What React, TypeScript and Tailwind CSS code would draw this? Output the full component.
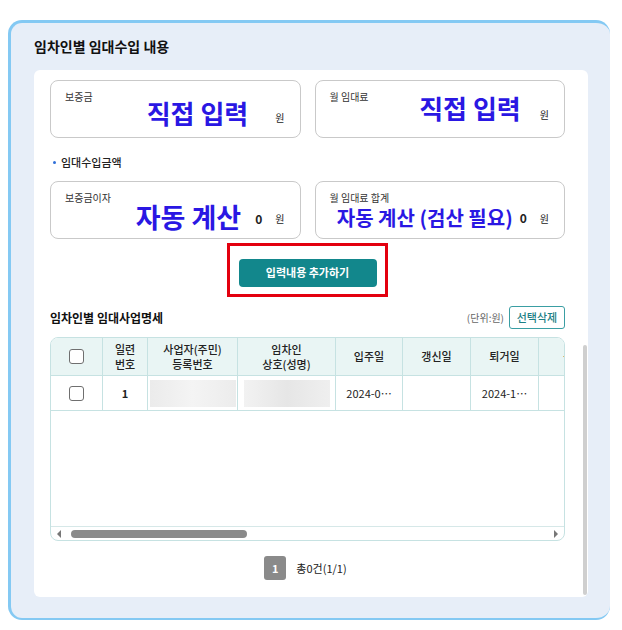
import React from 'react';

const blue = 'text-[#2a17e3]';

function Checkbox() {
    return <span className="block h-[15px] w-[15px] rounded-[3px] border border-[#6f6f6f] bg-white" />;
}

function AmountBox({
    label,
    children,
}: {
    label: string;
    children: React.ReactNode;
}) {
    return (
        <div className="flex h-[58px] flex-1 flex-col rounded-[8px] border border-[#c9c9c9] bg-white pl-[14px] pr-[15px] pt-[9px]">
            <span className="text-[10px] leading-[14px] text-[#333]">{label}</span>
            {children}
        </div>
    );
}

const cols = [
    { w: 'w-[52px]', head: <Checkbox />, cell: <Checkbox /> },
    { w: 'w-[45px]', head: <>일련<br />번호</>, cell: '1' },
    { w: 'w-[90px]', head: <>사업자(주민)<br />등록번호</>, cell: <span className="block h-[27px] w-[86px] bg-linear-to-r from-[#ebebeb] via-[#f4f4f4] to-[#ececec]" /> },
    { w: 'w-[98px]', head: <>임차인<br />상호(성명)</>, cell: <span className="block h-[27px] w-[86px] bg-linear-to-r from-[#f2f2f2] via-[#e6e6e6] to-[#efefef]" /> },
    { w: 'w-[67px]', head: '입주일', cell: '2024-0…' },
    { w: 'w-[68px]', head: '갱신일', cell: '' },
    { w: 'w-[68px]', head: '퇴거일', cell: '2024-1…' },
    { w: 'w-[80px]', head: '등록일', cell: '' },
];

export default function App() {
    return (
        <div className="h-[630px] w-[622px] overflow-hidden bg-white pl-[8px] pt-[20px] font-['Noto_Sans_CJK_KR','Noto_Sans',sans-serif] text-[#222]">
            <div className="flex h-[600px] w-[602px] flex-col rounded-[14px] border-b-2 border-l-[3px] border-t-[3px] border-[#84c9f3] bg-[#e7eef8] pl-[23px] pr-[22px]">
                <h2 className="h-[47px] pt-[12px] text-[14px] font-bold leading-[22px] text-[#111]">임차인별 임대수입 내용</h2>

                <div className="mb-[21px] flex flex-1 rounded-[6px] bg-white">
                    <div className="ml-[16px] flex w-[515px] flex-col pt-[10px]">
                        {/* 직접 입력 */}
                        <div className="flex gap-[14px]">
                            <AmountBox label="보증금">
                                <div className="-mt-[6px] flex items-center justify-end">
                                    <span className={`text-[26px] font-bold leading-[30px] ${blue}`}>직접 입력</span>
                                    <span className="ml-[27px] mt-[8px] text-[10px]">원</span>
                                </div>
                            </AmountBox>
                            <AmountBox label="월 임대료">
                                <div className="-mt-[11px] flex items-center justify-end">
                                    <span className={`text-[26px] font-bold leading-[30px] ${blue}`}>직접 입력</span>
                                    <span className="ml-[19px] mt-[12px] text-[10px]">원</span>
                                </div>
                            </AmountBox>
                        </div>

                        <div className="mt-[17px] flex h-[14px] items-center gap-[5px] pl-[3px] text-[11px] font-medium">
                            <span className="h-[3px] w-[3px] rounded-full bg-[#2f6fd8]" />
                            임대수입금액
                        </div>

                        {/* 자동 계산 */}
                        <div className="mt-[12px] flex gap-[14px]">
                            <AmountBox label="보증금이자">
                                <div className="-mt-[3px] flex items-center justify-end">
                                    <span className={`text-[27px] font-bold leading-[30px] ${blue}`}>자동 계산</span>
                                    <span className="ml-[14px] mt-[3px] text-[12px] font-bold">0</span>
                                    <span className="ml-[13px] mt-[3px] text-[10px]">원</span>
                                </div>
                            </AmountBox>
                            <AmountBox label="월 임대료 합계">
                                <div className="flex items-center justify-end">
                                    <span className={`text-[20px] font-bold leading-[26px] ${blue}`}>자동 계산 (검산 필요)</span>
                                    <span className="ml-[7px] text-[12px] font-bold">0</span>
                                    <span className="ml-[13px] text-[10px]">원</span>
                                </div>
                            </AmountBox>
                        </div>

                        <div className="mx-auto mt-[4px] flex h-[54px] w-[161px] items-center justify-center border-[3px] border-[#e3000f] pt-[5px]">
                            <button className="h-[28px] w-[138px] rounded-[4px] bg-[#12878c] text-[11px] font-bold text-white">
                                입력내용 추가하기
                            </button>
                        </div>

                        <div className="mt-[9px] flex h-[23px] items-center">
                            <span className="text-[12px] font-bold text-[#111]">임차인별 임대사업명세</span>
                            <span className="ml-auto text-[10px] text-[#666]">(단위:원)</span>
                            <button className="ml-[5px] h-[23px] w-[56px] rounded-[3px] border border-[#3a9ea3] text-[11px] font-medium text-[#1d7f85]">
                                선택삭제
                            </button>
                        </div>

                        {/* 명세 테이블 */}
                        <div className="mt-[8px] flex h-[204px] flex-col overflow-hidden rounded-[8px] border border-[#c6e2e2]">
                            <div className="flex-1 overflow-hidden">
                                <div className="flex h-[38px] w-max border-b border-[#c6e2e2] bg-[#e9f5f4]">
                                    {cols.map((c, i) => (
                                        <div key={i} className={`${c.w} flex shrink-0 items-center justify-center border-r border-[#c6e2e2] text-center text-[11px] font-medium leading-[15px]`}>
                                            {c.head}
                                        </div>
                                    ))}
                                </div>
                                <div className="flex h-[35px] w-max border-b border-[#c6e2e2]">
                                    {cols.map((c, i) => (
                                        <div key={i} className={`${c.w} flex shrink-0 items-center justify-center border-r border-[#c6e2e2] text-[11px] ${i === 1 ? 'font-bold' : ''}`}>
                                            {c.cell}
                                        </div>
                                    ))}
                                </div>
                            </div>
                            <div className="flex h-[14px] items-center border-t border-[#d6e8e8] px-[6px]">
                                <span className="h-0 w-0 border-y-[4px] border-r-[4px] border-y-transparent border-r-[#777]" />
                                <span className="ml-[10px] h-[8px] w-[176px] rounded-full bg-[#8a8a8a]" />
                                <span className="ml-auto h-0 w-0 border-y-[4px] border-l-[4px] border-y-transparent border-l-[#777]" />
                            </div>
                        </div>

                        <div className="mt-[15px] flex items-center justify-center gap-[10px] pr-[4px]">
                            <span className="flex h-[24px] w-[22px] items-center justify-center rounded-[3px] bg-[#8a8a8a] text-[11px] font-bold text-white">1</span>
                            <span className="text-[11px]">총0건(1/1)</span>
                        </div>
                    </div>
                    <div className="ml-[18px] mt-[275px] h-[250px] w-[4px] rounded-[2px] bg-[#cfcfcf]" />
                </div>
            </div>
        </div>
    );
}
